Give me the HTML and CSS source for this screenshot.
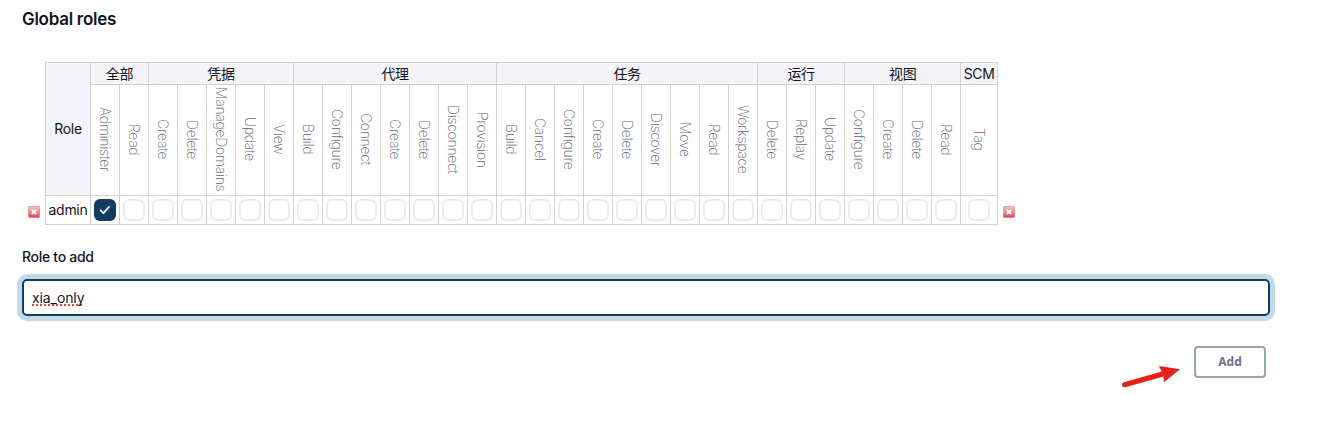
FILE: index.html
```
<!DOCTYPE html>
<html lang="zh-CN">
<head>
<meta charset="utf-8">
<title>Global roles</title>
<link rel="stylesheet" href="styles.css">
</head>
<body>
<main class="page">
<h2 class="title">Global roles</h2>
<div class="matrix">
<svg class="remove" viewBox="0 0 12 12"><defs><linearGradient id="red" x1="0" y1="0" x2="0" y2="1"><stop offset="0" stop-color="#f3c2c4"/><stop offset=".5" stop-color="#e88d93"/><stop offset="1" stop-color="#d83f4d"/></linearGradient></defs><rect x=".5" y=".5" width="11" height="11" rx=".6" fill="url(#red)" stroke="#dc8087" stroke-opacity=".7"/><path d="M3.8 3.8l4.4 4.4M8.2 3.8L3.8 8.2" stroke="#fff" stroke-width="1.9"/></svg>
<table class="roles">
<colgroup><col class="c-role"><col span="30" class="c-perm"><col class="c-scm"></colgroup>
<tr class="groups"><th rowspan="2">Role</th><th colspan="2">全部</th><th colspan="5">凭据</th><th colspan="7">代理</th><th colspan="9">任务</th><th colspan="3">运行</th><th colspan="4">视图</th><th>SCM</th></tr>
<tr class="perms">
<td><span>Administer</span></td><td><span>Read</span></td>
<td><span>Create</span></td><td><span>Delete</span></td><td><span>ManageDomains</span></td><td><span>Update</span></td><td><span>View</span></td>
<td><span>Build</span></td><td><span>Configure</span></td><td><span>Connect</span></td><td><span>Create</span></td><td><span>Delete</span></td><td><span>Disconnect</span></td><td><span>Provision</span></td>
<td><span>Build</span></td><td><span>Cancel</span></td><td><span>Configure</span></td><td><span>Create</span></td><td><span>Delete</span></td><td><span>Discover</span></td><td><span>Move</span></td><td><span>Read</span></td><td><span>Workspace</span></td>
<td><span>Delete</span></td><td><span>Replay</span></td><td><span>Update</span></td>
<td><span>Configure</span></td><td><span>Create</span></td><td><span>Delete</span></td><td><span>Read</span></td>
<td><span>Tag</span></td>
</tr>
<tr class="checks">
<td>admin</td>
<td><i class="box on"><svg viewBox="0 0 22 22"><path d="M6.6 11.3l2.8 2.8 5.6-6.2"/></svg></i></td><td><i class="box"></i></td>
<td><i class="box"></i></td><td><i class="box"></i></td><td><i class="box"></i></td><td><i class="box"></i></td><td><i class="box"></i></td>
<td><i class="box"></i></td><td><i class="box"></i></td><td><i class="box"></i></td><td><i class="box"></i></td><td><i class="box"></i></td><td><i class="box"></i></td><td><i class="box"></i></td>
<td><i class="box"></i></td><td><i class="box"></i></td><td><i class="box"></i></td><td><i class="box"></i></td><td><i class="box"></i></td><td><i class="box"></i></td><td><i class="box"></i></td><td><i class="box"></i></td><td><i class="box"></i></td>
<td><i class="box"></i></td><td><i class="box"></i></td><td><i class="box"></i></td>
<td><i class="box"></i></td><td><i class="box"></i></td><td><i class="box"></i></td><td><i class="box"></i></td>
<td><i class="box"></i></td>
</tr>
</table>
<svg class="remove" viewBox="0 0 12 12"><rect x=".5" y=".5" width="11" height="11" rx=".6" fill="url(#red)" stroke="#dc8087" stroke-opacity=".7"/><path d="M3.8 3.8l4.4 4.4M8.2 3.8L3.8 8.2" stroke="#fff" stroke-width="1.9"/></svg>
</div>
<div class="label">Role to add</div>
<div class="field"><span class="typed">xia_only</span></div>
<div class="actions">
<svg class="arrow" viewBox="0 0 60 26"><path d="M2 17.2L39.8 6.6 36.8 1 58 4.3 41.8 17.3 41.5 11.4 3.2 22.2A2.55 2.55 0 0 1 2 17.2Z" fill="#e62117"/></svg>
<button class="add">Add</button>
</div>
</main>
</body>
</html>
```
FILE: styles.css
```
* { box-sizing: border-box; }
body { margin: 0; background: #fff; color: #14141f; font: 14px/20px Inter, "Noto Sans CJK SC", sans-serif; }
.page { padding: 8px 57px 0 22px; }
.title { margin: 0; font-size: 17px; line-height: 22px; font-weight: 600; letter-spacing: -.28px; }
.matrix { display: flex; align-items: flex-end; margin: 32px 0 0 6px; gap: 5px; }
.remove { width: 12px; height: 12px; flex: none; margin-bottom: 7px; }
.roles { width: 953px; table-layout: fixed; border-collapse: separate; border-spacing: 0; border: solid #d3d3cd; border-width: 1px 0 0 1px; }
.c-role { width: 45px; }
.c-perm { width: 29px; }
.c-scm { width: 37px; }
.roles th, .roles td { padding: 0; border: solid #d3d3cd; border-width: 0 1px 1px 0; text-align: center; vertical-align: middle; font-weight: 400; white-space: nowrap; letter-spacing: -.3px; }
.roles th { background: #f3f3f8; }
.groups { height: 22px; }
.groups th { line-height: 20px; }
.perms { height: 111px; }
.roles .perms td { padding: 0 1px 1px 0; }
.perms span { display: block; width: 20px; margin: 0 auto; writing-mode: vertical-rl; font-size: 14px; line-height: 20px; font-weight: 200; letter-spacing: -.32px; color: #666670; }
.checks { height: 29px; }
.box { display: block; width: 22px; height: 22px; margin: 0 auto; border: 2px solid #e9edf1; border-radius: 6px; }
.box.on { border: 0; background: #123d60; }
.box svg { display: block; width: 22px; height: 22px; fill: none; stroke: #fff; stroke-width: 1.8; stroke-linecap: round; stroke-linejoin: round; }
.label { margin-top: 22px; line-height: 20px; font-weight: 500; letter-spacing: -.3px; }
.field { margin-top: 12px; height: 37px; padding: 7px 8px; border: 2px solid #123d60; border-radius: 5px; box-shadow: 0 0 0 5px #c2d9e7; line-height: 20px; }
.typed { letter-spacing: -.1px; text-decoration: underline dotted #f04438 2px; text-underline-offset: 1px; text-decoration-skip-ink: none; }
.actions { display: flex; justify-content: flex-end; gap: 12px; margin: 30px 4px 0 0; }
.arrow { width: 60px; height: 26px; margin-top: 19px; }
.add { width: 72px; height: 32px; padding: 0; border: 2px solid #98a6b2; border-radius: 4px; background: #fff; color: #716f88; font: 700 12px/28px "Noto Sans", sans-serif; }
```
